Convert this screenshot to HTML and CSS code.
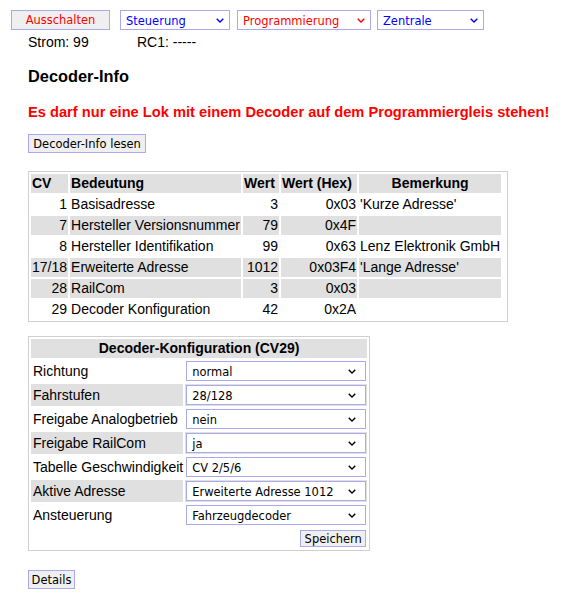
FILE: index.html
```html
<!DOCTYPE html>
<html lang="de">
<head>
<meta charset="utf-8">
<title>Decoder-Info</title>
<link rel="stylesheet" href="styles.css">
</head>
<body>
<div class="nav">
  <button class="btn btn-off red">Ausschalten</button>
  <div class="sel navsel w-steuerung blue"><span>Steuerung</span><svg class="chev" viewBox="0 0 8 5" width="8" height="5"><polyline points="0.7,0.7 4,4 7.3,0.7"/></svg></div>
  <div class="sel navsel w-prog red"><span>Programmierung</span><svg class="chev" viewBox="0 0 8 5" width="8" height="5"><polyline points="0.7,0.7 4,4 7.3,0.7"/></svg></div>
  <div class="sel navsel w-zentrale blue"><span>Zentrale</span><svg class="chev" viewBox="0 0 8 5" width="8" height="5"><polyline points="0.7,0.7 4,4 7.3,0.7"/></svg></div>
</div>
<div class="status"><span class="strom">Strom: 99</span><span>RC1: -----</span></div>
<div class="main">
  <h3 class="title">Decoder-Info</h3>
  <p class="warn">Es darf nur eine Lok mit einem Decoder auf dem Programmiergleis stehen!</p>
  <button class="btn btn-read">Decoder-Info lesen</button>
  <table class="info">
    <tr class="g"><th class="c-cv">CV</th><th class="c-bed">Bedeutung</th><th class="c-wert">Wert</th><th class="c-hex">Wert (Hex)</th><th class="c-bem c">Bemerkung</th></tr>
    <tr><td class="r">1</td><td>Basisadresse</td><td class="r">3</td><td class="r">0x03</td><td>'Kurze Adresse'</td></tr>
    <tr class="g"><td class="r">7</td><td>Hersteller Versionsnummer</td><td class="r">79</td><td class="r">0x4F</td><td></td></tr>
    <tr><td class="r">8</td><td>Hersteller Identifikation</td><td class="r">99</td><td class="r">0x63</td><td>Lenz Elektronik GmbH</td></tr>
    <tr class="g"><td class="r">17/18</td><td>Erweiterte Adresse</td><td class="r">1012</td><td class="r">0x03F4</td><td>'Lange Adresse'</td></tr>
    <tr class="g"><td class="r">28</td><td>RailCom</td><td class="r">3</td><td class="r">0x03</td><td></td></tr>
    <tr><td class="r">29</td><td>Decoder Konfiguration</td><td class="r">42</td><td class="r">0x2A</td><td></td></tr>
  </table>
  <table class="cfg">
    <tr class="g"><th colspan="2">Decoder-Konfiguration (CV29)</th></tr>
    <tr><td class="lbl">Richtung</td><td class="selcell"><div class="sel cfgsel"><span>normal</span><svg class="chev" viewBox="0 0 8 5" width="8" height="5"><polyline points="0.7,0.7 4,4 7.3,0.7"/></svg></div></td></tr>
    <tr class="g"><td class="lbl">Fahrstufen</td><td class="selcell"><div class="sel cfgsel"><span>28/128</span><svg class="chev" viewBox="0 0 8 5" width="8" height="5"><polyline points="0.7,0.7 4,4 7.3,0.7"/></svg></div></td></tr>
    <tr><td class="lbl">Freigabe Analogbetrieb</td><td class="selcell"><div class="sel cfgsel"><span>nein</span><svg class="chev" viewBox="0 0 8 5" width="8" height="5"><polyline points="0.7,0.7 4,4 7.3,0.7"/></svg></div></td></tr>
    <tr class="g"><td class="lbl">Freigabe RailCom</td><td class="selcell"><div class="sel cfgsel"><span>ja</span><svg class="chev" viewBox="0 0 8 5" width="8" height="5"><polyline points="0.7,0.7 4,4 7.3,0.7"/></svg></div></td></tr>
    <tr><td class="lbl">Tabelle Geschwindigkeit</td><td class="selcell"><div class="sel cfgsel"><span>CV 2/5/6</span><svg class="chev" viewBox="0 0 8 5" width="8" height="5"><polyline points="0.7,0.7 4,4 7.3,0.7"/></svg></div></td></tr>
    <tr class="g"><td class="lbl">Aktive Adresse</td><td class="selcell"><div class="sel cfgsel"><span>Erweiterte Adresse 1012</span><svg class="chev" viewBox="0 0 8 5" width="8" height="5"><polyline points="0.7,0.7 4,4 7.3,0.7"/></svg></div></td></tr>
    <tr><td class="lbl">Ansteuerung</td><td class="selcell"><div class="sel cfgsel"><span>Fahrzeugdecoder</span><svg class="chev" viewBox="0 0 8 5" width="8" height="5"><polyline points="0.7,0.7 4,4 7.3,0.7"/></svg></div></td></tr>
    <tr><td colspan="2" class="savecell"><button class="btn btn-save">Speichern</button></td></tr>
  </table>
  <button class="btn btn-details">Details</button>
</div>
</body>
</html>
```
FILE: styles.css
```css
body {
  margin: 0;
  font-family: "Liberation Sans", Arial, sans-serif;
  font-size: 14px;
  color: #000;
  background: #fff;
}

.red { color: #ff0000; }
.blue { color: #0000ff; }

.btn,
.sel {
  font-family: "DejaVu Sans Condensed", "DejaVu Sans", sans-serif;
  font-size: 12.75px;
  box-sizing: border-box;
  border: 1px solid #a9a9ec;
}

.btn {
  display: block;
  background: #efefef;
  padding: 0;
  margin: 0;
  text-align: center;
  line-height: 16px;
  color: #000;
}

.sel {
  display: flex;
  align-items: center;
  justify-content: space-between;
  background: #fff;
  white-space: nowrap;
}

.chev {
  flex: none;
  fill: none;
  stroke: currentColor;
  stroke-width: 1.4;
}

/* top navigation */
.nav {
  display: flex;
  padding: 10px 0 0 11px;
}

.btn-off {
  width: 99px;
  height: 20px;
  color: #ff0000;
}

.navsel {
  height: 20px;
  padding: 0 5px 0 5px;
}

.w-steuerung { width: 110px; margin-left: 10px; }
.w-prog { width: 134px; margin-left: 7px; }
.w-zentrale { width: 107px; margin-left: 6px; }

.status {
  display: flex;
  padding: 4px 0 0 28px;
  line-height: 16px;
}

.strom { width: 109px; }

/* main area */
.main {
  padding-left: 28px;
}

.title {
  font-size: 16.38px;
  line-height: 19px;
  margin: 17px 0 0;
  font-weight: bold;
}

.warn {
  color: #ff0000;
  font-weight: bold;
  font-size: 14.67px;
  line-height: 17px;
  margin: 18px 0 0;
}

.btn-read {
  width: 118px;
  height: 19px;
  margin-top: 13px;
}

/* info table */
.info,
.cfg {
  border: 1px solid #d0d0d0;
  border-spacing: 2px;
  border-collapse: separate;
}

.info {
  margin-top: 18px;
  padding-right: 4px;
}

.info th,
.info td {
  height: 19px;
  line-height: 19px;
  padding: 0 1px;
  white-space: nowrap;
  text-align: left;
}

.info .c-cv { width: 35px; }
.info .c-bed { width: 169px; }
.info .c-wert { width: 34px; }
.info .c-hex { width: 74px; }
.info .c-bem { width: 139px; }

.info th.c { text-align: center; }
.info td.r { text-align: right; }

tr.g > td,
tr.g > th {
  background: #e0e0e0;
}

/* configuration table */
.cfg {
  margin-top: 14px;
}

.cfg th {
  height: 19px;
  line-height: 19px;
  padding: 0;
  text-align: center;
}

.cfg td.lbl {
  padding: 0 0 0 2px;
  height: 22px;
  white-space: nowrap;
}

.cfg td.selcell {
  padding: 1px;
}

.cfgsel {
  width: 180px;
  height: 20px;
  padding: 0 9px 0 5px;
  color: #000;
}

.cfg td.savecell {
  padding: 2px 1px 1px 0;
}

.btn-save {
  width: 66px;
  height: 17px;
  line-height: 15px;
  margin-left: auto;
}

.btn-details {
  width: 47px;
  height: 19px;
  margin-top: 19px;
}
```
